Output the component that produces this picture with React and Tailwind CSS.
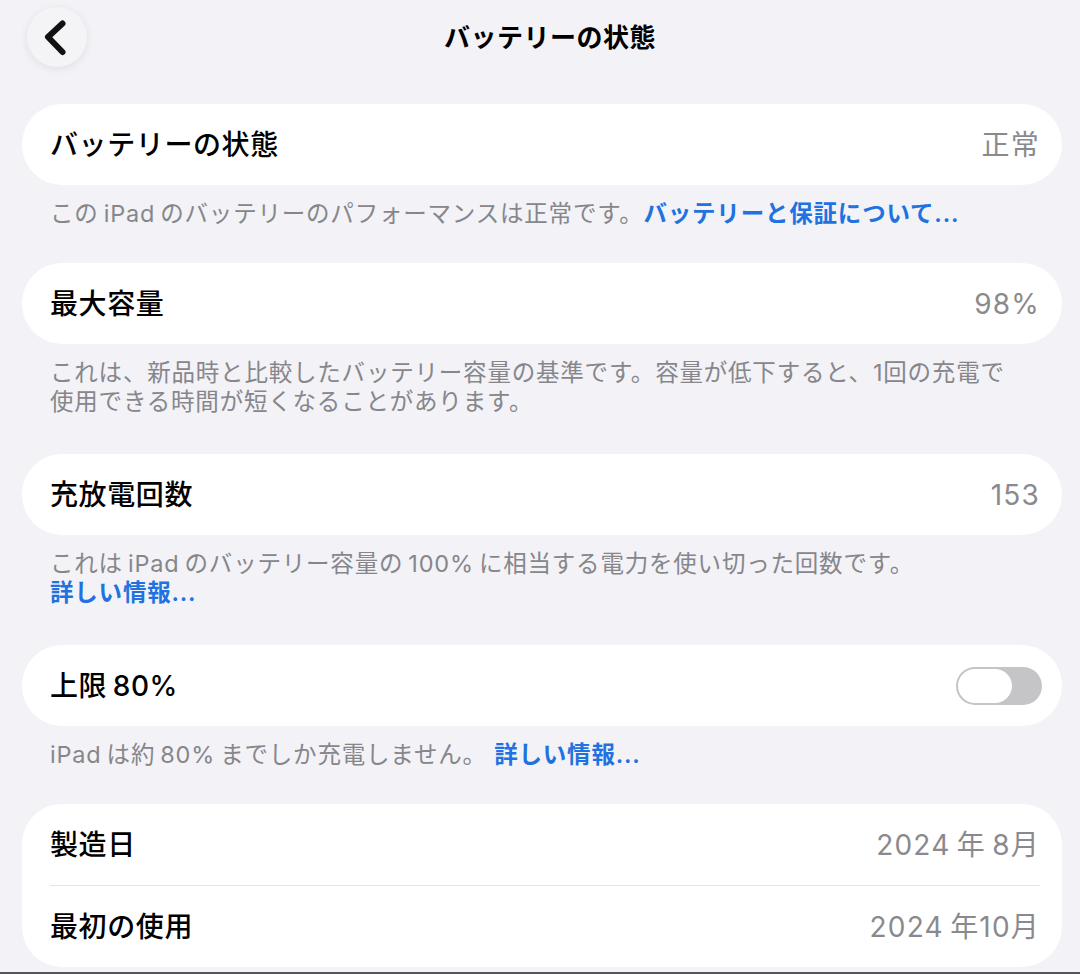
import React from "react";

const font = { fontFamily: '"Inter", "Noto Sans CJK JP", "Noto Sans", sans-serif' };
const T = "\u2009";

function Card({ children }) {
  return <div className="bg-white rounded-[40px] mr-[-4px]">{children}</div>;
}

function Row({ label, value, right }) {
  return (
    <div className="h-[81px] flex items-center justify-between pl-[28px] pr-[22px]">
      <span className="text-[28px] font-medium text-black tracking-[0.6px]">{label}</span>
      {right ? right : <span className="text-[28px] text-[#8a8a8e] tracking-[1.2px]">{value}</span>}
    </div>
  );
}

function Footer({ children, extra }) {
  return (
    <div className={"pl-[28px] pr-[20px] pt-[14px] text-[23.5px] leading-[29px] tracking-[0.8px] text-[#86868b] " + (extra ? "pb-[38px]" : "pb-[35px]")}>
      {children}
    </div>
  );
}

function Link({ children }) {
  return <span className="text-[#1f72df] font-semibold">{children}</span>;
}

function Toggle() {
  return (
    <div className="w-[86px] h-[38px] rounded-full bg-[#c5c5c8] p-[2px] flex items-center mr-[-2px]">
      <div className="w-[54px] h-[34px] rounded-full bg-white" />
    </div>
  );
}

export default function App() {
  return (
    <div style={font} className="w-[1080px] h-[974px] bg-[#f2f2f7] overflow-hidden border-b-2 border-[#55555a] flex flex-col">
      <div className="relative h-[74px] flex items-center justify-center">
        <div className="absolute left-[27px] top-[7px] w-[60px] h-[60px] rounded-full bg-[#f4f4f6] shadow-[0_2px_10px_rgba(0,0,0,0.08)] flex items-center justify-center">
          <svg width="60" height="60" viewBox="0 0 60 60">
            <path d="M35.5 16.5 L21 30 L35.5 45" fill="none" stroke="#111" strokeWidth="6" strokeLinecap="round" strokeLinejoin="round" />
          </svg>
        </div>
        <h1 className="text-[26px] font-bold text-black ml-[20px] tracking-[0.5px]">バッテリーの状態</h1>
      </div>

      <div className="pl-[22px] pr-[22px] pt-[30px] flex flex-col">
        <Card>
          <Row label="バッテリーの状態" value="正常" />
        </Card>
        <Footer>
          この{T}iPad{T}のバッテリーのパフォーマンスは正常です。<Link>バッテリーと保証について...</Link>
        </Footer>

        <Card>
          <Row label="最大容量" value="98%" />
        </Card>
        <Footer extra>
          これは、新品時と比較したバッテリー容量の基準です。容量が低下すると、1回の充電で
          <br />
          使用できる時間が短くなることがあります。
        </Footer>

        <Card>
          <Row label="充放電回数" value="153" />
        </Card>
        <Footer extra>
          これは{T}iPad{T}のバッテリー容量の{T}100%{T}に相当する電力を使い切った回数です。
          <br />
          <Link>詳しい情報...</Link>
        </Footer>

        <Card>
          <Row label={"上限" + T + "80%"} right={<Toggle />} />
        </Card>
        <Footer>
          iPad{T}は約{T}80%{T}までしか充電しません。 <Link>詳しい情報...</Link>
        </Footer>

        <Card>
          <Row label="製造日" value={"2024" + T + "年" + T + "8月"} />
          <div className="ml-[28px] mr-[22px] h-px bg-[#e3e3e8]" />
          <Row label="最初の使用" value={"2024" + T + "年10月"} />
        </Card>
      </div>
    </div>
  );
}
